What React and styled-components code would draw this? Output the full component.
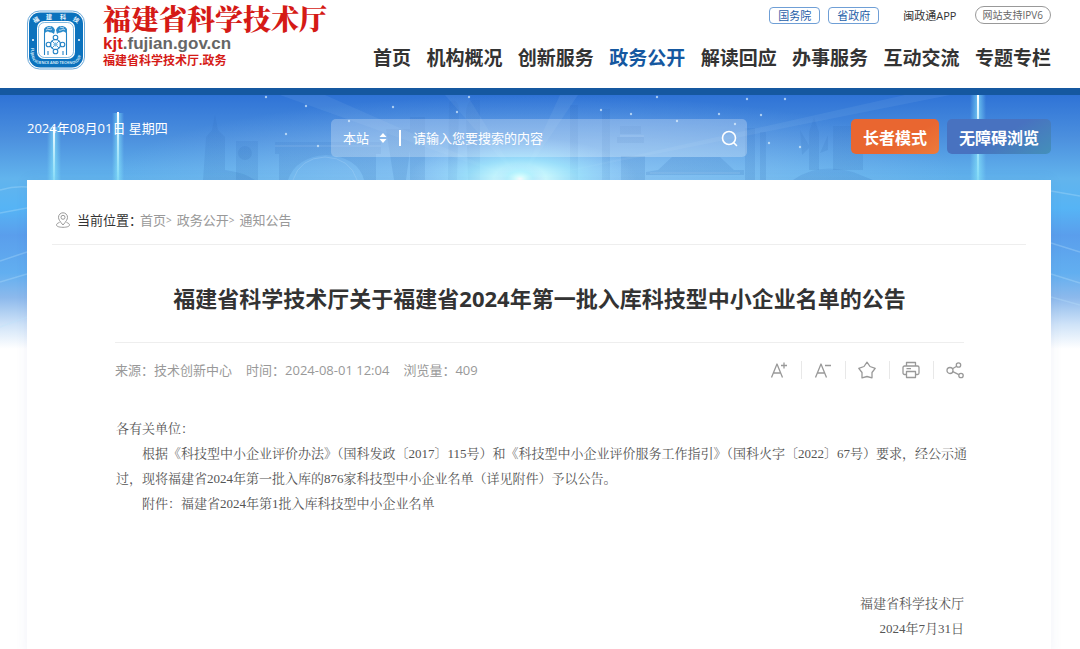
import { useState } from "react";
import styled, { createGlobalStyle } from "styled-components";

const GlobalStyle = createGlobalStyle`
  * {
    box-sizing: border-box;
  }

  body {
    margin: 0;
    background-color: #ffffff;
    color: #333333;
    font-family: "Open Sans", "Noto Sans CJK SC", sans-serif;
    font-size: 13px;
  }

  a {
    color: inherit;
    text-decoration: none;
  }

  button,
  input,
  select {
    font-family: inherit;
  }
`;

const Page = styled.div`
  display: flex;
  flex-direction: column;
  min-height: 100vh;
`;

const Header = styled.header`
  display: flex;
  justify-content: space-between;
  height: 95px;
  padding: 0 29px 0 27px;
  border-bottom: 7px solid #1558a0;
`;

const Brand = styled.a`
  display: flex;
  align-items: flex-start;
  gap: 18px;
  white-space: nowrap;

  svg {
    width: 58px;
    height: 60px;
    margin-top: 10px;
  }
`;

const BrandText = styled.div`
  display: flex;
  flex-direction: column;
  padding-top: 2px;
  color: #d51a16;
`;

const BrandName = styled.strong`
  font-family: "Noto Serif CJK SC", "Noto Sans CJK SC", serif;
  font-size: 28px;
  font-weight: 900;
  line-height: 32px;
`;

const BrandDomain = styled.span`
  font-family: "Liberation Sans", sans-serif;
  font-size: 17px;
  font-weight: 700;
  line-height: 19px;
  color: #666666;

  b {
    color: #d51a16;
  }
`;

const BrandSub = styled.span`
  font-size: 12px;
  font-weight: 700;
  line-height: 16px;
`;

const HeaderRight = styled.div`
  display: flex;
  flex-direction: column;
  flex: 0 1 678px;
  padding-top: 5px;
  white-space: nowrap;
`;

const TopLinks = styled.div`
  display: flex;
  align-items: center;
  justify-content: flex-end;
  height: 20px;
  font-size: 11px;
`;

const TagLink = styled.a`
  margin-right: 8px;
  padding: 0 8px;
  border: 1px solid #6f9fd6;
  border-radius: 4px;
  color: #1f5ea8;
  line-height: 15px;
`;

const AppLink = styled.a`
  margin: 0 18px 0 16px;
`;

const Ipv6Link = styled.a`
  padding: 0 7px;
  border: 1px solid #999999;
  border-radius: 9px;
  color: #666666;
  font-size: 10px;
  line-height: 16px;
`;

const Nav = styled.nav`
  display: flex;
  justify-content: space-between;
  padding-top: 18px;
`;

const NavLink = styled.a`
  color: ${(props) => (props.$active ? "#1558a0" : "#333333")};
  font-size: 19px;
  font-weight: 700;
  line-height: 30px;
`;

const Main = styled.main`
  position: relative;
  display: flex;
  flex: 1;
  flex-direction: column;
  padding: 0 29px 0 27px;
`;

// Decorative sky behind the search bar and the upper part of the card
const Backdrop = styled.svg`
  position: absolute;
  top: 0;
  left: 0;
  z-index: -1;
  width: 100%;
  height: 270px;
`;

const Tools = styled.div`
  display: flex;
  justify-content: space-between;
  height: 85px;
  padding-top: 24px;
  color: #ffffff;
`;

const Today = styled.time`
  flex: 0 0 304px;
  line-height: 18px;
`;

const SearchBar = styled.form`
  display: flex;
  align-items: center;
  flex: 1;
  height: 38px;
  padding: 0 9px 0 12px;
  border-radius: 5px;
  background-color: rgba(255, 255, 255, 0.25);
`;

const Scope = styled.label`
  display: flex;
  align-items: center;
  gap: 8px;

  select {
    width: 28px;
    padding: 0;
    border: none;
    appearance: none;
    background: transparent;
    color: #ffffff;
    font-size: 13px;
  }

  option {
    color: #333333;
  }
`;

const Keyword = styled.input`
  flex: 1;
  min-width: 0;
  margin-left: 12px;
  padding: 0 0 0 12px;
  border: none;
  border-left: 2px solid #ffffff;
  height: 16px;
  outline: none;
  background: transparent;
  color: #ffffff;
  font-size: 13px;

  &::placeholder {
    color: #ffffff;
    opacity: 1;
  }
`;

const IconButton = styled.button`
  display: flex;
  padding: 0;
  border: none;
  background: transparent;
  color: inherit;
  cursor: pointer;
`;

const ModeButtons = styled.div`
  display: flex;
  gap: 8px;
  margin-left: 104px;
`;

const ModeButton = styled.button`
  height: 35px;
  padding: 0 12px;
  border: none;
  border-radius: 5px;
  background: ${(props) =>
    props.$elder
      ? "linear-gradient(150deg, #e96630 60%, #ec7b3c)"
      : "linear-gradient(150deg, #4872c0 50%, #4490ba)"};
  color: #ffffff;
  font-size: 16px;
  font-weight: 700;
  white-space: nowrap;
  cursor: pointer;
`;

const Card = styled.section`
  flex: 1;
  padding: 0 25px;
  background-color: #ffffff;
  box-shadow: 0 0 12px rgba(60, 90, 160, 0.08);
`;

const Breadcrumb = styled.nav`
  display: flex;
  align-items: center;
  height: 65px;
  padding: 16px 4px 0;
  border-bottom: 1px solid #eeeeee;
  color: #999999;
  line-height: 48px;

  svg {
    margin-right: 7px;
  }

  i {
    margin-right: 5px;
    font-size: 10px;
    font-style: normal;
  }
`;

const Current = styled.span`
  margin-right: -2px;
  color: #333333;
`;

const Article = styled.article`
  padding: 0 62px 12px 63px;
`;

const Title = styled.h1`
  margin: 0;
  padding: 35px 0 25px;
  border-bottom: 1px solid #eeeeee;
  font-size: 22px;
  font-weight: 700;
  line-height: 37px;
  text-align: center;
`;

const MetaRow = styled.div`
  display: flex;
  align-items: center;
  justify-content: space-between;
  height: 53px;
  color: #999999;
`;

const MetaList = styled.div`
  display: flex;
  gap: 14px;
`;

const ActionList = styled.div`
  display: flex;
  align-items: center;

  button + button {
    margin-left: 13px;
    padding-left: 12px;
    border-left: 1px solid #e8e8e8;
  }
`;

const Content = styled.div`
  margin: 20px -9px 0 1px;
  color: #555555;
  font-family: "Liberation Serif", "Noto Serif CJK SC", "Noto Sans CJK SC", serif;

  p {
    margin: 0;
    line-height: 25px;
    text-indent: 2em;
  }

  p:first-child {
    text-indent: 0;
  }
`;

const Signature = styled.footer`
  padding-top: 75px;
  color: #555555;
  font-family: "Liberation Serif", "Noto Serif CJK SC", "Noto Sans CJK SC", serif;
  line-height: 25px;
  text-align: right;
`;

const navItems = [
  "首页",
  "机构概况",
  "创新服务",
  "政务公开",
  "解读回应",
  "办事服务",
  "互动交流",
  "专题专栏",
];

const stars = [
  [266, 2], [306, 11], [393, 12], [349, 26], [469, 2], [457, 17], [286, 39],
  [318, 51], [601, 15], [631, 19], [657, 2], [719, 19], [747, 4], [761, 20],
  [785, 4], [769, 48], [800, 52], [677, 26], [735, 29],
];

const Emblem = () => (
  <svg viewBox="0 0 58 60" aria-hidden="true">
    <defs>
      <path id="emblemArc" d="M4 38 V43 Q4 54 15 54 H43 Q54 54 54 43 V38" />
    </defs>
    <rect x="0.5" y="1" width="57" height="58" rx="12" fill="#ffffff" stroke="#6aa9da" />
    <rect x="2" y="2.5" width="54" height="55" rx="11" fill="#0b72bd" />
    <rect x="10" y="11" width="38" height="38" rx="7" fill="#ffffff" />
    <rect x="11.5" y="12.5" width="35" height="35" rx="6" fill="none" stroke="#4b9bd1" strokeWidth="0.7" />
    <g fill="#e9f5fc" fontSize="6" fontWeight="700" textAnchor="middle">
      <text x="9" y="12" transform="rotate(-30 9 10)">福</text>
      <text x="22" y="9">建</text>
      <text x="36" y="9">科</text>
      <text x="49" y="12" transform="rotate(30 49 10)">技</text>
    </g>
    <text fill="#cfe8f7" fontSize="3.8" fontWeight="700">
      <textPath href="#emblemArc">FUJIAN SCIENCE AND TECHNOLOGY</textPath>
    </text>
    <circle cx="6" cy="30" r="1" fill="#ffffff" />
    <circle cx="52" cy="30" r="1" fill="#ffffff" />
    <g fill="#2a8bcb">
      <path d="M17 24v-5c2-3 4-3 6-3 3 0 4 2 5 4l-1 4c-2-2-3-1-5-2s-3 0-5 2z" />
      <path d="M40 24v-5c-2-3-4-3-6-3-3 0-4 2-5 4l1 4c2-2 3-1 5-2s3 0 5 2z" />
    </g>
    <g fill="none" stroke="#ffffff" strokeWidth="0.7">
      <path d="M19 20c2-2 4 1 6-1M32 20c2 1 4-2 6 0M20 18l4-1M33 17l4 1" />
    </g>
    <g fill="none" stroke="#2584c6" strokeWidth="1.1">
      <path d="M17.500 23v22M39.500 23v22M21 41v4M36 41v4" />
      <circle cx="28.500" cy="34.500" r="5" />
      <circle cx="28.500" cy="27.500" r="2.300" />
      <circle cx="28.500" cy="41.500" r="2.300" />
      <circle cx="21.500" cy="34.500" r="2.300" />
      <circle cx="35.500" cy="34.500" r="2.300" />
      <path d="M25 31l7 7M32 31l-7 7" strokeWidth="0.8" />
    </g>
    <circle cx="28.500" cy="34.500" r="2" fill="#7cbbe3" />
  </svg>
);

const Sky = () => (
  <Backdrop viewBox="0 0 1080 270" preserveAspectRatio="none" aria-hidden="true">
    <defs>
      <linearGradient id="sky" x1="0" y1="0" x2="0" y2="1">
        <stop offset="0" stopColor="#2f73d6" />
        <stop offset="0.16" stopColor="#4c90de" />
        <stop offset="0.31" stopColor="#62b4ed" />
        <stop offset="0.42" stopColor="#56b4f5" />
        <stop offset="0.52" stopColor="#5a9eec" />
        <stop offset="0.66" stopColor="#62aff0" />
        <stop offset="0.75" stopColor="#8cb9ec" />
        <stop offset="0.85" stopColor="#cfe3f8" />
        <stop offset="0.94" stopColor="#ffffff" />
      </linearGradient>
      <radialGradient id="haze">
        <stop offset="0" stopColor="#c4e2ff" stopOpacity="0.55" />
        <stop offset="0.5" stopColor="#b4d9fb" stopOpacity="0.3" />
        <stop offset="1" stopColor="#a4cffa" stopOpacity="0" />
      </radialGradient>
      <radialGradient id="glow">
        <stop offset="0" stopColor="#ffffff" />
        <stop offset="0.2" stopColor="#d5ffff" stopOpacity="0.95" />
        <stop offset="0.5" stopColor="#a5eeff" stopOpacity="0.65" />
        <stop offset="1" stopColor="#9fd5ff" stopOpacity="0" />
      </radialGradient>
      <linearGradient id="beam" x1="0" y1="0" x2="0" y2="1">
        <stop offset="0" stopColor="#ffffff" />
        <stop offset="1" stopColor="#8fe4fb" stopOpacity="0.5" />
      </linearGradient>
      <linearGradient id="beamGlow" x1="0" y1="0" x2="1" y2="0">
        <stop offset="0" stopColor="#8ff0ff" stopOpacity="0" />
        <stop offset="0.5" stopColor="#8ff0ff" stopOpacity="0.6" />
        <stop offset="1" stopColor="#8ff0ff" stopOpacity="0" />
      </linearGradient>
      <linearGradient id="tower" x1="0" y1="0" x2="0" y2="1">
        <stop offset="0" stopColor="#2460b5" stopOpacity="0.12" />
        <stop offset="1" stopColor="#3878bd" stopOpacity="0.2" />
      </linearGradient>
    </defs>
    <rect width="1080" height="270" fill="url(#sky)" />
    <ellipse cx="535" cy="86" rx="430" ry="86" fill="url(#haze)" />
    <g fill="url(#tower)">
      <path d="M203 85l3-43 6-7 3-16 3 16 7 7v33q18 2 30 10z" />
      <path d="M236 46h22v39h-22z" />
      <circle cx="245" cy="58" r="7" />
      <path d="M275 47h106v12h-5v26h-12q-6-23-38-25-30 2-38 25h-9V59h-4z" />
      <path d="M386 34h27l-7 51h-12zM410 22h15v63h-15zM449 7q9-5 10 8l-2 70h-9zM473 5q-7 1-7 15l2 65h12V5z" />
      <path d="M570 10h8v75h-8zM602 14h8v71h-8zM620 31h21v8h-21zM617 42h27v6h-27zM621 61h24v24h-24z" />
      <path d="M646 77l12-2 14-13h48l14 13h10v5h-98zM745 33h10v52h-10zM760 37h6v48h-6z" />
      <path d="M809 75V37l5-15 5 15v38zM800 35l10 17-8 8zM828 40l-8 18 8-3zM833 31h30v44h-30z" />
      <path d="M793 85q24-18 60-8l20 8z" />
    </g>
    <g stroke="#d4ecff" fill="none" opacity="0.2">
      <path d="M325 62q-25 1-32 23M325 62q25 1 32 23M275 51h106M620 41h24M650 78h90" />
    </g>
    <g fill="#d8edff" opacity="0.07">
      <path d="M520 86L280 0h45zM520 86L445 0h22zM520 86L560 0h18zM520 86L905 0h45z" />
    </g>
    <ellipse cx="522" cy="86" rx="115" ry="44" fill="url(#glow)" />
    <ellipse cx="520" cy="84" rx="26" ry="16" fill="url(#glow)" />
    <g fill="url(#beamGlow)">
      <rect x="47" y="32" width="14" height="60" />
      <rect x="112" y="18" width="12" height="70" />
      <rect x="970" y="0" width="16" height="85" />
    </g>
    <g fill="url(#beam)">
      <rect x="53" y="32" width="2" height="58" />
      <rect x="117" y="17" width="2" height="70" />
      <rect x="977" y="0" width="2" height="85" />
    </g>
    <g fill="#e6f6ff" opacity="0.65">
      {stars.map(([x, y]) => (
        <circle key={`${x}-${y}`} cx={x} cy={y} r="1.2" />
      ))}
    </g>
    <g fill="none" stroke="#bce4fc" strokeWidth="1.5" opacity="0.3">
      <path d="M0 95q14-4 27-3M0 118l27-5M0 166l27-9M0 187l27-8M0 232l27-10M1051 96l29 5M1051 148l29 9M1051 179l29 9M1051 202l29 8" />
    </g>
  </Backdrop>
);

const ActionIcon = ({ children }) => (
  <svg
    width="18"
    height="18"
    viewBox="0 0 18 18"
    fill="none"
    stroke="currentColor"
    strokeWidth="1.3"
    strokeLinejoin="round"
    aria-hidden="true"
  >
    {children}
  </svg>
);

const App = () => {
  const [scope, setScope] = useState("site");
  const [keyword, setKeyword] = useState("");

  return (
    <>
      <GlobalStyle />
      <Page>
        <Header>
          <Brand href="#">
            <Emblem />
            <BrandText>
              <BrandName>福建省科学技术厅</BrandName>
              <BrandDomain>
                <b>kjt</b>.fujian.gov.cn
              </BrandDomain>
              <BrandSub>福建省科学技术厅.政务</BrandSub>
            </BrandText>
          </Brand>
          <HeaderRight>
            <TopLinks>
              <TagLink href="#">国务院</TagLink>
              <TagLink href="#">省政府</TagLink>
              <AppLink href="#">闽政通APP</AppLink>
              <Ipv6Link href="#">网站支持IPV6</Ipv6Link>
            </TopLinks>
            <Nav>
              {navItems.map((item) => (
                <NavLink key={item} href="#" $active={item === "政务公开"}>
                  {item}
                </NavLink>
              ))}
            </Nav>
          </HeaderRight>
        </Header>

        <Main>
          <Sky />
          <Tools>
            <Today dateTime="2024-08-01">2024年08月01日 星期四</Today>
            <SearchBar onSubmit={(e) => e.preventDefault()}>
              <Scope>
                <select
                  aria-label="搜索范围"
                  value={scope}
                  onChange={(e) => setScope(e.target.value)}
                >
                  <option value="site">本站</option>
                </select>
                <svg width="8" height="10" viewBox="0 0 8 10" fill="#ffffff" aria-hidden="true">
                  <path d="M4 0l3.500 4h-7zM4 10L.5 6h7z" />
                </svg>
              </Scope>
              <Keyword
                type="text"
                aria-label="搜索内容"
                placeholder="请输入您要搜索的内容"
                value={keyword}
                onChange={(e) => setKeyword(e.target.value)}
              />
              <IconButton type="submit" aria-label="搜索">
                <svg width="17" height="17" viewBox="0 0 17 17" fill="none" stroke="#ffffff" strokeWidth="1.6" strokeLinecap="round">
                  <circle cx="8" cy="8" r="6.500" />
                  <path d="M13 13l2.500 2.500" />
                </svg>
              </IconButton>
            </SearchBar>
            <ModeButtons>
              <ModeButton type="button" $elder>
                长者模式
              </ModeButton>
              <ModeButton type="button">无障碍浏览</ModeButton>
            </ModeButtons>
          </Tools>

          <Card>
            <Breadcrumb aria-label="当前位置">
              <svg width="14" height="16" viewBox="0 0 14 16" fill="none" stroke="#999999" aria-hidden="true">
                <path d="M7 13C4 9.500 2.500 7.500 2.500 5.300a4.500 4.500 0 0 1 9 0C11.500 7.500 10 9.500 7 13z" />
                <circle cx="7" cy="5.300" r="2" />
                <path d="M3.500 10.500C1.500 11 .5 12 .5 13c0 1.400 2.600 2.300 6.500 2.300s6.500-.9 6.500-2.300c0-1-1-2-3-2.500" />
              </svg>
              <Current>当前位置：</Current>
              <a href="#">首页</a>
              <i>&gt;</i>
              <a href="#">政务公开</a>
              <i>&gt;</i>
              <a href="#">通知公告</a>
            </Breadcrumb>

            <Article>
              <Title>福建省科学技术厅关于福建省2024年第一批入库科技型中小企业名单的公告</Title>
              <MetaRow>
                <MetaList>
                  <span>来源：技术创新中心</span>
                  <span>时间：2024-08-01 12:04</span>
                  <span>浏览量：409</span>
                </MetaList>
                <ActionList>
                  <IconButton type="button" aria-label="放大字体">
                    <ActionIcon>
                      <path d="M1.500 16.500L7 3l5.500 13.500M3.500 12h7M14 1.500v6M11 4.500h6" />
                    </ActionIcon>
                  </IconButton>
                  <IconButton type="button" aria-label="缩小字体">
                    <ActionIcon>
                      <path d="M1.500 16.500L7 3l5.500 13.500M3.500 12h7M11 4.500h6" />
                    </ActionIcon>
                  </IconButton>
                  <IconButton type="button" aria-label="收藏">
                    <ActionIcon>
                      <path d="M9 1.200l3 4.300 5.200 1.800-3.200 4.200v5.300L9 15.500l-5 1.300v-5.300L.8 7.300 6 5.500z" />
                    </ActionIcon>
                  </IconButton>
                  <IconButton type="button" aria-label="打印">
                    <ActionIcon>
                      <path d="M4.500 5V1.500h9V5M4.500 13.500h-2a1.500 1.500 0 0 1-1.500-1.500V6.500A1.500 1.500 0 0 1 2.500 5h13A1.500 1.500 0 0 1 17 6.500V12a1.500 1.500 0 0 1-1.500 1.500h-2M4.500 10.500h9v6h-9zM4.500 7.700h4.500" />
                    </ActionIcon>
                  </IconButton>
                  <IconButton type="button" aria-label="分享">
                    <ActionIcon>
                      <circle cx="4" cy="9.500" r="3" />
                      <circle cx="12.500" cy="4" r="2.200" />
                      <circle cx="15" cy="14.500" r="2.200" />
                      <path d="M6.500 7.800l4.200-2.600M6.800 10.700l6 2.900" />
                    </ActionIcon>
                  </IconButton>
                </ActionList>
              </MetaRow>

              <Content>
                <p>各有关单位：</p>
                <p>
                  根据《科技型中小企业评价办法》（国科发政〔2017〕115号）和《科技型中小企业评价服务工作指引》（国科火字〔2022〕67号）要求，经公示通过，现将福建省2024年第一批入库的876家科技型中小企业名单（详见附件）予以公告。
                </p>
                <p>附件：福建省2024年第1批入库科技型中小企业名单</p>
              </Content>
              <Signature>
                <div>福建省科学技术厅</div>
                <div>2024年7月31日</div>
              </Signature>
            </Article>
          </Card>
        </Main>
      </Page>
    </>
  );
};

export default App;
